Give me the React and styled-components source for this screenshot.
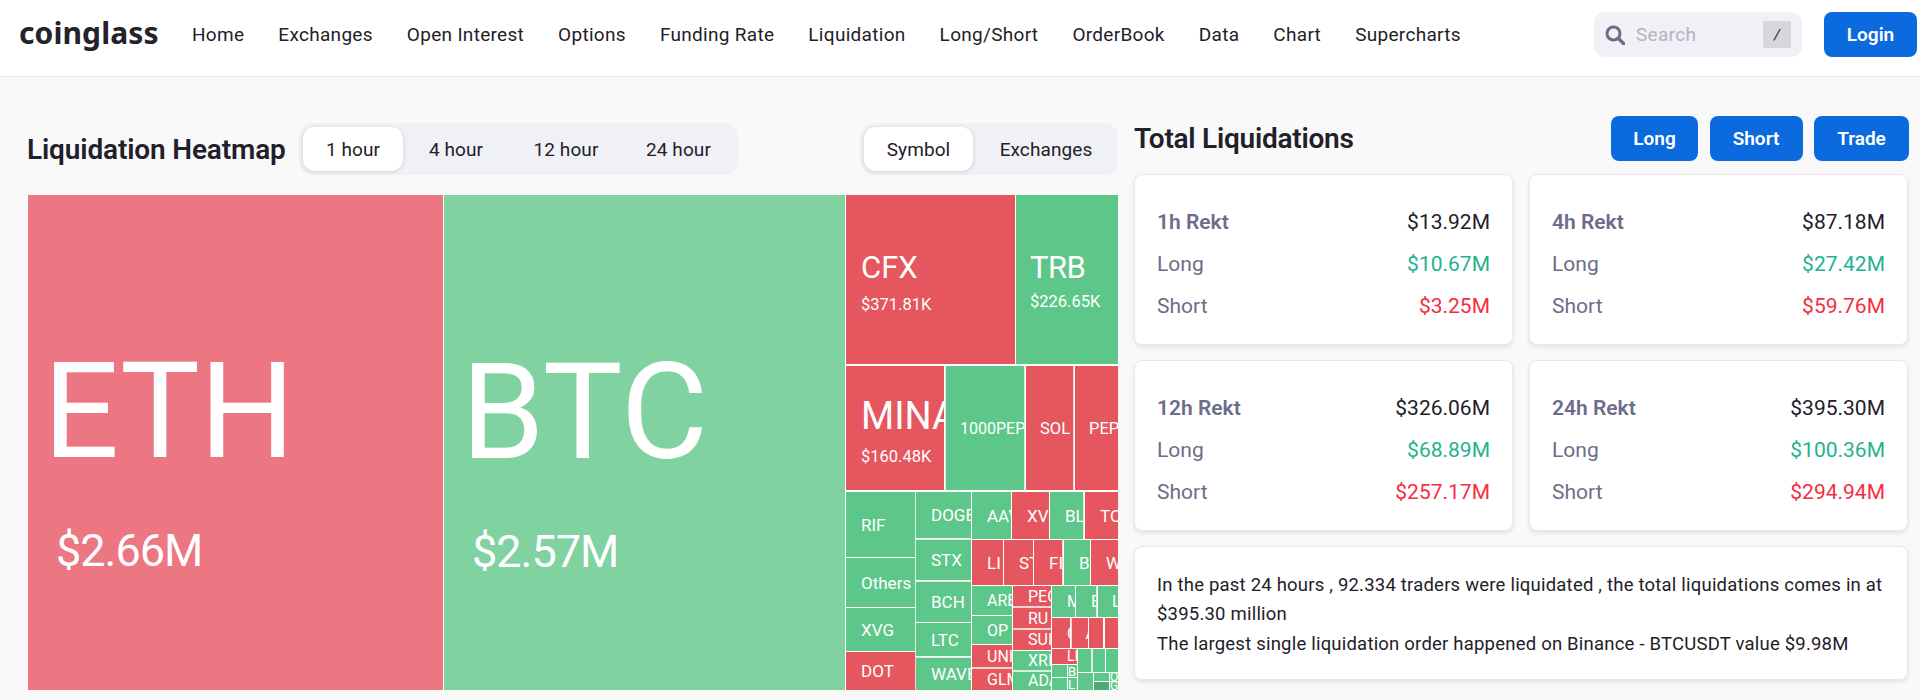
import React from "react";
import styled, { createGlobalStyle } from "styled-components";

const FONT = `Roboto, "Liberation Sans", sans-serif`;

const Global = createGlobalStyle`
  html, body { margin: 0; padding: 0; background: #f9f9fa; }
  body { font-family: ${FONT}; color: #1f2029; overflow: hidden; }
  * { box-sizing: border-box; }
`;

const Page = styled.div`
  width: 1920px;
  height: 700px;
  overflow: hidden;
`;

const Header = styled.header`
  height: 77px;
  background: #fff;
  border-bottom: 1px solid #e6e6e9;
  display: flex;
  align-items: center;
  padding: 0 3px 7px 19px;
`;

const Logo = styled.div`
  font-family: "Noto Sans", sans-serif;
  font-weight: 700;
  font-size: 30px;
  letter-spacing: 0.1px;
  color: #22232c;
  width: 173px;
  margin-top: -4px;
`;

const NavList = styled.nav`
  display: flex;
  gap: 34px;
  flex: 1;
`;

const NavLink = styled.a`
  font-size: 19px;
  letter-spacing: 0.3px;
  color: #1f2029;
`;

const SearchBox = styled.div`
  width: 208px;
  height: 45px;
  background: #f0f1f6;
  border-radius: 11px;
  display: flex;
  align-items: center;
  padding: 0 11px;
  margin-right: 22px;
`;

const SearchIcon = styled.svg`
  width: 20px;
  height: 20px;
  flex: none;
  margin-right: 11px;
`;

const SearchHint = styled.span`
  flex: 1;
  font-size: 19px;
  letter-spacing: 0.3px;
  color: #b4b3c3;
`;

const Kbd = styled.span`
  width: 28px;
  height: 27px;
  background: #d6d7dc;
  border-radius: 2px;
  display: flex;
  align-items: center;
  justify-content: center;
  font-size: 15px;
  font-style: italic;
`;

const PrimaryButton = styled.button`
  font-family: ${FONT};
  height: 45px;
  width: ${(p) => p.$w}px;
  background: #0b6bde;
  color: #fff;
  border: 0;
  border-radius: 8px;
  font-size: 19px;
  font-weight: 600;
  padding: 0;
`;

const Main = styled.main`
  display: flex;
  padding-left: 28px;
  gap: 16px;
`;

const LeftColumn = styled.section`
  width: 1090px;
  padding-top: 46px;
`;

const ToolRow = styled.div`
  height: 52px;
  margin-bottom: 20px;
  display: flex;
  align-items: center;
`;

const Title = styled.h2`
  margin: 0;
  font-size: 28px;
  font-weight: 600;
  letter-spacing: -0.25px;
  color: #1f2029;
`;

const HeatTitle = styled(Title)`
  margin: 0 0 0 -1px;
  width: 272px;
  flex: none;
  letter-spacing: -0.15px;
`;

const Segment = styled.div`
  height: 52px;
  background: #f0f1f6;
  border-radius: 14px;
  padding: 4px;
  display: flex;
  margin-left: ${(p) => p.$push || 0}px;
`;

const SegmentItem = styled.div`
  width: ${(p) => p.$w}px;
  height: 44px;
  padding-left: ${(p) => p.$inset || 0}px;
  display: flex;
  align-items: center;
  justify-content: center;
  font-size: 19px;
  letter-spacing: 0.1px;
  border-radius: 12px;
  color: #1f2029;
  background: ${(p) => (p.$active ? "#fff" : "transparent")};
  box-shadow: ${(p) => (p.$active ? "0 1px 4px rgba(30,30,60,.16)" : "none")};
`;

const Heatmap = styled.svg`
  display: block;
  width: 1090px;
  height: 495px;
  background: #fff;
  font-family: ${FONT};
`;

const TONES = { r: "#e5565f", g: "#5dc789", R: "#ec7682", G: "#80d2a0", d: "#4fa873" };

const TileRect = styled.rect`
  fill: ${(p) => TONES[p.$tone]};
`;

const TileText = styled.text`
  fill: #fff;
  font-size: ${(p) => p.$size}px;
  letter-spacing: ${(p) => p.$track || 0}px;
`;

const RightColumn = styled.section`
  width: 774px;
  padding-top: 39px;
`;

const TotalsHead = styled.div`
  height: 45px;
  margin-bottom: 13px;
  display: flex;
  align-items: center;
  justify-content: space-between;
`;

const Actions = styled.div`
  display: flex;
  gap: 11.5px;
  margin-right: -1px;
`;

const Cards = styled.div`
  display: grid;
  grid-template-columns: 379px 379px;
  gap: 15px 16px;
`;

const Card = styled.article`
  background: #fff;
  border: 1px solid #e9e9ed;
  border-radius: 8px;
  box-shadow: 0 2px 4px rgba(20, 20, 50, 0.1);
`;

const StatCard = styled(Card)`
  height: 171px;
  padding: 26px 22px 0;
`;

const StatRow = styled.div`
  height: 42px;
  display: flex;
  align-items: center;
  justify-content: space-between;
  font-size: 21px;
`;

const StatLabel = styled.span`
  color: #6d6c8a;
  font-weight: ${(p) => (p.$head ? 600 : 400)};
`;

const VALUE = { total: "#1f2029", long: "#1fb38f", short: "#f62d41" };

const StatValue = styled.span`
  color: ${(p) => VALUE[p.$kind]};
`;

const Summary = styled(Card)`
  grid-column: 1 / 3;
  height: 134px;
  padding: 24px 22px 0;
  font-size: 18.5px;
  line-height: 29.3px;
  letter-spacing: 0.21px;
  color: #1f2029;
`;

const NAV = ["Home", "Exchanges", "Open Interest", "Options", "Funding Rate", "Liquidation", "Long/Short", "OrderBook", "Data", "Chart", "Supercharts"];

const STATS = [
  ["1h Rekt", "$13.92M", "$10.67M", "$3.25M"],
  ["4h Rekt", "$87.18M", "$27.42M", "$59.76M"],
  ["12h Rekt", "$326.06M", "$68.89M", "$257.17M"],
  ["24h Rekt", "$395.30M", "$100.36M", "$294.94M"],
];

// x0, y0, x1, y1, tone, label, font size, label inset
const TILES = [
  [945.5, 366, 1024.5, 490, "g", "1000PEP", 16, 14.5],
  [1026, 366, 1073.5, 490, "r", "SOL", 16.5, 14],
  [1075, 366, 1118, 490, "r", "PEP", 16.5, 14],
  [846, 492, 915.5, 557, "g", "RIF", 17],
  [846, 558, 915.5, 607, "g", "Others", 17],
  [846, 608, 915.5, 651, "g", "XVG", 17],
  [846, 652, 915.5, 690, "r", "DOT", 17],
  [916, 492, 971, 538, "g", "DOGE", 17],
  [916, 539.5, 971, 580, "g", "STX", 17],
  [916, 581.5, 971, 622, "g", "BCH", 17],
  [916, 623, 971, 656, "g", "LTC", 17],
  [916, 657.5, 971, 690, "g", "WAVE", 17],
  [972, 492, 1011, 539, "g", "AAV", 17],
  [1012, 492, 1049, 539, "r", "XVS", 17],
  [1050, 492, 1083.5, 539, "g", "BL", 17],
  [1085, 492, 1118, 539, "r", "TO", 17],
  [972, 540, 1003, 585, "r", "LI", 17],
  [1004, 540, 1033, 585, "r", "ST", 17],
  [1034, 540, 1062.5, 585, "r", "FI", 17],
  [1064, 540, 1090, 585, "g", "B", 17],
  [1091, 540, 1118, 585, "r", "W", 17],
  [972, 586, 1012, 615, "g", "ARE", 16],
  [972, 616, 1012, 644, "g", "OP", 16],
  [972, 645, 1012, 667.5, "r", "UNI", 16],
  [972, 668.5, 1012, 690, "r", "GLM", 16],
  [1013, 586, 1051, 606.5, "r", "PEC", 16],
  [1013, 607.5, 1051, 628.5, "r", "RU", 16],
  [1013, 629.5, 1051, 650, "r", "SUI", 16],
  [1013, 651, 1051, 670.5, "g", "XRI", 16],
  [1013, 671.5, 1051, 690, "g", "ADA", 16],
  [1052, 586, 1075, 617, "g", "M", 16],
  [1076, 586, 1096.5, 617, "g", "E", 16],
  [1098, 586, 1118, 617, "g", "L", 16, 14],
  [1052, 618, 1070, 648, "r", "C", 16],
  [1071.5, 618, 1088, 648, "r", "A", 16, 14],
  [1089, 618, 1103, 648, "r"],
  [1105, 618, 1118, 648, "r"],
  [1052, 649, 1077, 664, "r", "LI", 14],
  [1052, 665, 1067, 677, "g"],
  [1052, 678, 1067, 690, "g"],
  [1068, 665, 1077, 677, "g", "B", 13, 0],
  [1068, 678, 1077, 690, "g", "L", 13, 0],
  [1078, 649, 1091.5, 672, "g"],
  [1092.5, 649, 1105, 672, "g"],
  [1106, 649, 1118, 672, "g"],
  [1078, 673, 1093, 690, "g"],
  [1094, 673, 1109, 681, "g"],
  [1094, 682, 1109, 690, "d"],
  [1110, 673, 1118, 681, "g", "O", 12, 0],
  [1110, 682, 1118, 690, "g", "G", 12, 0],
];

// x0, y0, x1, y1, tone, label, label x, baseline, size, tracking, value, value x, baseline, size, tracking
const FEATURED = [
  [28, 195, 443, 690, "R", "ETH", 43, 457, 134, -0.5, "$2.66M", 56, 566, 45, -1],
  [444, 195, 845, 690, "G", "BTC", 461, 458, 134, 0, "$2.57M", 472, 567, 45, -1],
  [846, 195, 1015, 364, "r", "CFX", 861, 278, 31, 0, "$371.81K", 861, 310, 16.5, 0],
  [1016, 195, 1118, 364, "g", "TRB", 1030, 278, 31, -0.6, "$226.65K", 1030, 307, 16.5, 0],
  [846, 366, 944, 490, "r", "MINA", 861, 429, 38, 0, "$160.48K", 861, 462, 16.5, 0],
];

const PlainTile = ({ t }) => {
  const [x0, y0, x1, y1, tone, label, size, pad = 15] = t;
  const w = x1 - x0;
  const h = y1 - y0;
  return (
    <svg x={x0} y={y0} width={w} height={h}>
      <TileRect x={0} y={0} width={w} height={h} $tone={tone} />
      {label && (
        <TileText x={pad} y={h / 2 + size * 0.355} $size={size}>
          {label}
        </TileText>
      )}
    </svg>
  );
};

const FeaturedTile = ({ t }) => {
  const [x0, y0, x1, y1, tone, label, lx, ly, ls, lt, value, vx, vy, vs, vt] = t;
  const w = x1 - x0;
  const h = y1 - y0;
  return (
    <svg x={x0} y={y0} width={w} height={h}>
      <TileRect x={0} y={0} width={w} height={h} $tone={tone} />
      <TileText x={lx - x0} y={ly - y0} $size={ls} $track={lt}>{label}</TileText>
      <TileText x={vx - x0} y={vy - y0} $size={vs} $track={vt}>{value}</TileText>
    </svg>
  );
};

export default function App() {
  return (
    <Page>
      <Global />
      <Header>
        <Logo>coinglass</Logo>
        <NavList>
          {NAV.map((n) => (
            <NavLink key={n}>{n}</NavLink>
          ))}
        </NavList>
        <SearchBox>
          <SearchIcon viewBox="0 0 20 20" fill="none" stroke="#6d6c8a">
            <circle cx="8.5" cy="8.5" r="6.5" strokeWidth="3" />
            <path d="M13.5 13.5 L18.5 18.5" strokeWidth="3.4" strokeLinecap="round" />
          </SearchIcon>
          <SearchHint>Search</SearchHint>
          <Kbd>/</Kbd>
        </SearchBox>
        <PrimaryButton $w={93}>Login</PrimaryButton>
      </Header>
      <Main>
        <LeftColumn>
          <ToolRow>
            <HeatTitle>Liquidation Heatmap</HeatTitle>
            <Segment>
              <SegmentItem $w={100} $active>1 hour</SegmentItem>
              <SegmentItem $w={106}>4 hour</SegmentItem>
              <SegmentItem $w={114}>12 hour</SegmentItem>
              <SegmentItem $w={111}>24 hour</SegmentItem>
            </Segment>
            <Segment $push={122}>
              <SegmentItem $w={109} $active>Symbol</SegmentItem>
              <SegmentItem $w={141} $inset={5}>Exchanges</SegmentItem>
            </Segment>
          </ToolRow>
          <Heatmap viewBox="28 195 1090 495">
            {FEATURED.map((t) => (
              <FeaturedTile key={t[5]} t={t} />
            ))}
            {TILES.map((t, i) => (
              <PlainTile key={i} t={t} />
            ))}
          </Heatmap>
        </LeftColumn>
        <RightColumn>
          <TotalsHead>
            <Title>Total Liquidations</Title>
            <Actions>
              <PrimaryButton $w={87}>Long</PrimaryButton>
              <PrimaryButton $w={93}>Short</PrimaryButton>
              <PrimaryButton $w={95}>Trade</PrimaryButton>
            </Actions>
          </TotalsHead>
          <Cards>
            {STATS.map(([head, total, long, short]) => (
              <StatCard key={head}>
                <StatRow>
                  <StatLabel $head>{head}</StatLabel>
                  <StatValue $kind="total">{total}</StatValue>
                </StatRow>
                <StatRow>
                  <StatLabel>Long</StatLabel>
                  <StatValue $kind="long">{long}</StatValue>
                </StatRow>
                <StatRow>
                  <StatLabel>Short</StatLabel>
                  <StatValue $kind="short">{short}</StatValue>
                </StatRow>
              </StatCard>
            ))}
            <Summary>
              In the past 24 hours , 92.334 traders were liquidated , the total liquidations comes in at
              <br />
              $395.30 million
              <br />
              The largest single liquidation order happened on Binance - BTCUSDT value $9.98M
            </Summary>
          </Cards>
        </RightColumn>
      </Main>
    </Page>
  );
}
